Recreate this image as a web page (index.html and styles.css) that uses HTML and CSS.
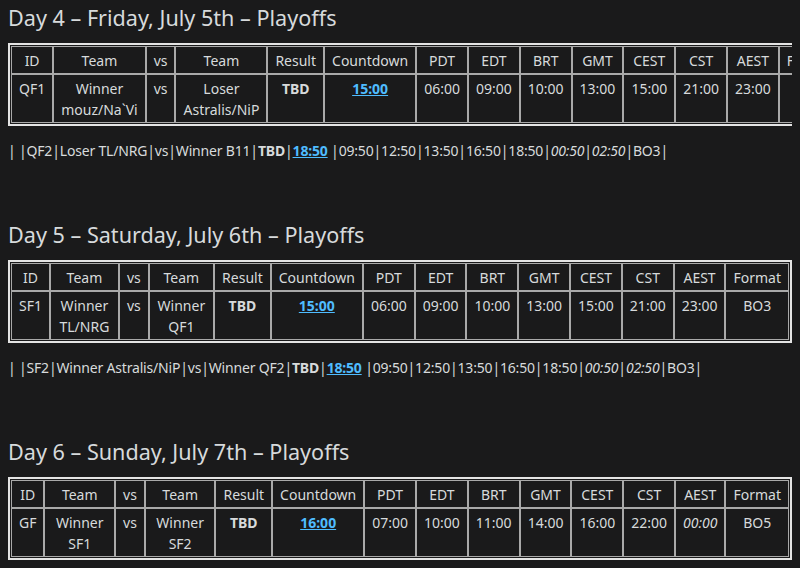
FILE: index.html
```html
<!DOCTYPE html>
<html lang="en">
<head>
<meta charset="utf-8">
<title>Playoffs schedule</title>
<link rel="stylesheet" href="styles.css">
</head>
<body>
<main class="page">
  <section class="day">
    <h2 class="day-title">Day 4 – Friday, July 5th – Playoffs</h2>
    <div class="table-wrap">
      <table class="schedule">
        <thead>
          <tr><th>ID</th><th>Team</th><th>vs</th><th>Team</th><th>Result</th><th>Countdown</th><th>PDT</th><th>EDT</th><th>BRT</th><th>GMT</th><th>CEST</th><th>CST</th><th>AEST</th><th>Format</th></tr>
        </thead>
        <tbody>
          <tr><td>QF1</td><td>Winner mouz/Na`Vi</td><td>vs</td><td>Loser Astralis/NiP</td><td><strong>TBD</strong></td><td><a href="#">15:00</a></td><td>06:00</td><td>09:00</td><td>10:00</td><td>13:00</td><td>15:00</td><td>21:00</td><td>23:00</td><td>BO3</td></tr>
        </tbody>
      </table>
    </div>
    <p class="raw">| |QF2|Loser TL/NRG|vs|Winner B11|<strong>TBD</strong>|<a href="#">18:50</a> |09:50|12:50|13:50|16:50|18:50|<em>00:50</em>|<em>02:50</em>|BO3|</p>
  </section>

  <section class="day">
    <h2 class="day-title">Day 5 – Saturday, July 6th – Playoffs</h2>
    <div class="table-wrap">
      <table class="schedule">
        <thead>
          <tr><th>ID</th><th>Team</th><th>vs</th><th>Team</th><th>Result</th><th>Countdown</th><th>PDT</th><th>EDT</th><th>BRT</th><th>GMT</th><th>CEST</th><th>CST</th><th>AEST</th><th>Format</th></tr>
        </thead>
        <tbody>
          <tr><td>SF1</td><td>Winner TL/NRG</td><td>vs</td><td>Winner QF1</td><td><strong>TBD</strong></td><td><a href="#">15:00</a></td><td>06:00</td><td>09:00</td><td>10:00</td><td>13:00</td><td>15:00</td><td>21:00</td><td>23:00</td><td>BO3</td></tr>
        </tbody>
      </table>
    </div>
    <p class="raw">| |SF2|Winner Astralis/NiP|vs|Winner QF2|<strong>TBD</strong>|<a href="#">18:50</a> |09:50|12:50|13:50|16:50|18:50|<em>00:50</em>|<em>02:50</em>|BO3|</p>
  </section>

  <section class="day">
    <h2 class="day-title">Day 6 – Sunday, July 7th – Playoffs</h2>
    <div class="table-wrap">
      <table class="schedule">
        <thead>
          <tr><th>ID</th><th>Team</th><th>vs</th><th>Team</th><th>Result</th><th>Countdown</th><th>PDT</th><th>EDT</th><th>BRT</th><th>GMT</th><th>CEST</th><th>CST</th><th>AEST</th><th>Format</th></tr>
        </thead>
        <tbody>
          <tr><td>GF</td><td>Winner SF1</td><td>vs</td><td>Winner SF2</td><td><strong>TBD</strong></td><td><a href="#">16:00</a></td><td>07:00</td><td>10:00</td><td>11:00</td><td>14:00</td><td>16:00</td><td>22:00</td><td><em>00:00</em></td><td>BO5</td></tr>
        </tbody>
      </table>
    </div>
  </section>
</main>
</body>
</html>
```

FILE: styles.css
```css
html, body {
  margin: 0;
  background: #1a1a1b;
}

body {
  color: #d7dadc;
  font-family: "Noto Sans", "Open Sans", sans-serif;
  font-size: 14px;
  line-height: 21px;
  overflow: hidden;
}

.page {
  padding: 3px 8px 8px;
}

.day + .day {
  margin-top: 59px;
}

.day-title {
  margin: 0 0 10px;
  font-size: 21.6px;
  line-height: 30px;
  font-weight: 400;
}

.table-wrap {
  overflow: hidden;
}

.schedule {
  border: 2px solid #e4e4e4;
  padding: 1px;
  border-spacing: 0;
}

.schedule th,
.schedule td {
  border: 1px solid #a9a9a9;
  padding: 2.5px 7px;
  font-weight: 400;
  text-align: center;
  vertical-align: top;
}

.raw {
  margin: 14px 0 0;
  letter-spacing: -0.18px;
}

strong {
  font-weight: 700;
}

a {
  color: #4fbcff;
  font-weight: 700;
  text-decoration: underline;
}
```
